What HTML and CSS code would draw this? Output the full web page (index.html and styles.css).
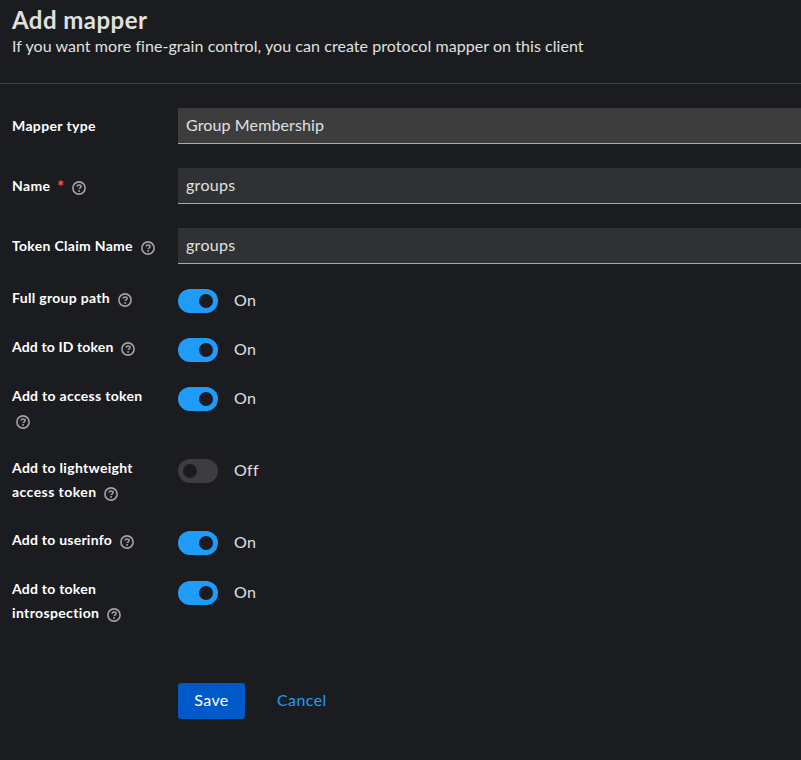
FILE: index.html
```html
<!DOCTYPE html>
<html lang="en">
<head>
<meta charset="utf-8">
<title>Add mapper</title>
<link rel="stylesheet" href="styles.css">
</head>
<body>
<svg class="defs" aria-hidden="true">
  <symbol id="help" viewBox="0 0 14 14">
    <circle cx="7" cy="7" r="6.1" fill="none" stroke="currentColor" stroke-width="1.6"/>
    <path d="M5 5.7C5.2 4.6 6 4.1 7.1 4.1s2 .6 2 1.5c0 1.2-1.9 1.2-1.9 2.5" fill="none" stroke="currentColor" stroke-width="1.5"/>
    <circle cx="7.1" cy="9.9" r=".95" fill="currentColor"/>
  </symbol>
</svg>
<header class="header">
  <h1 class="title">Add mapper</h1>
  <p class="subtitle">If you want more fine-grain control, you can create protocol mapper on this client</p>
</header>
<main class="form">
  <div class="row field"><div class="label"><span>Mapper type</span></div><div class="input readonly">Group Membership</div></div>
  <div class="row field"><div class="label"><span>Name</span><span class="required">*</span><svg class="help"><use href="#help"/></svg></div><div class="input">groups</div></div>
  <div class="row field"><div class="label"><span class="mid">Token Claim Name</span> <svg class="help"><use href="#help"/></svg></div><div class="input">groups</div></div>
  <div class="row"><div class="label"><span class="mid">Full group path</span> <svg class="help"><use href="#help"/></svg></div><div class="switch on"><i class="track"></i><span>On</span></div></div>
  <div class="row"><div class="label"><span class="tight">Add to ID token</span> <svg class="help"><use href="#help"/></svg></div><div class="switch on"><i class="track"></i><span>On</span></div></div>
  <div class="row"><div class="label"><span class="mid">Add to access token</span><br><svg class="help"><use href="#help"/></svg></div><div class="switch on"><i class="track"></i><span>On</span></div></div>
  <div class="row"><div class="label"><span class="mid">Add to lightweight</span><br><span class="wide">access token</span> <svg class="help"><use href="#help"/></svg></div><div class="switch"><i class="track"></i><span>Off</span></div></div>
  <div class="row"><div class="label"><span class="snug">Add to userinfo</span> <svg class="help"><use href="#help"/></svg></div><div class="switch on"><i class="track"></i><span>On</span></div></div>
  <div class="row last"><div class="label"><span class="snug">Add to token</span><br><span>introspection</span> <svg class="help"><use href="#help"/></svg></div><div class="switch on"><i class="track"></i><span>On</span></div></div>
  <div class="actions"><button class="save">Save</button><button class="cancel">Cancel</button></div>
</main>
</body>
</html>
```
FILE: styles.css
```css
* { box-sizing: border-box; }
body {
  margin: 0;
  height: 760px;
  overflow: hidden;
  background: #1b1c1f;
  color: #e0e0e0;
  font: 16px/24px Lato, "Open Sans", sans-serif;
}
.defs { position: absolute; width: 0; height: 0; }
.header { height: 84px; padding: 5px 12px 0; border-bottom: 1px solid #444548; }
.title { margin: 0; font-size: 24px; line-height: 29px; font-weight: 700; letter-spacing: .45px; }
.subtitle { margin: 0; white-space: nowrap; letter-spacing: .06px; }
.form { padding: 24px 0 0 12px; }
.row { display: grid; grid-template-columns: 166px 1fr; min-height: 25px; margin-bottom: 24px; }
.field { height: 36px; }
.label { margin: -2px 0 2px; color: #fff; font-size: 14px; font-weight: 700; line-height: 24px; letter-spacing: .36px; white-space: nowrap; }
.label .mid { letter-spacing: .3px; }
.label .snug { letter-spacing: .24px; }
.label .tight { letter-spacing: .14px; }
.label .wide { letter-spacing: .44px; }
.field .label { margin: 0; padding-top: 6px; }
.help { width: 14px; height: 14px; margin-left: 4px; color: #a3a3a3; vertical-align: -4px; }
.required { color: #fa4f3f; font-weight: 900; font-size: 16px; line-height: 20px; margin: 0 3px 0 7px; vertical-align: -2px; }
.input { height: 36px; padding: 5px 8px; letter-spacing: .3px; background: #303134; border-bottom: 1px solid #aaabac; }
.readonly { letter-spacing: .12px; background: #3d3d3e; }
.switch { display: flex; gap: 16px; height: 24px; margin-top: 1px; }
.switch span { margin-top: -1px; letter-spacing: .3px; }
.last .switch { margin-top: 2px; }
.track { width: 40px; height: 24px; padding: 5px; border-radius: 12px; background: #3d3d3f; }
.track::before { content: ""; display: block; width: 14px; height: 14px; border-radius: 50%; background: #1b1c1f; }
.on .track { background: #1f9cfa; }
.on .track::before { margin-left: 16px; }
.actions { display: flex; gap: 16px; padding: 32px 0 0 166px; }
button { height: 36px; border: 0; border-radius: 3px; padding: 0 16px 2px; font: inherit; letter-spacing: .4px; }
.save { width: 67px; padding-left: 15px; padding-right: 15px; background: #0059c9; color: #fff; }
.cancel { background: none; color: #1f9cfa; }
```
